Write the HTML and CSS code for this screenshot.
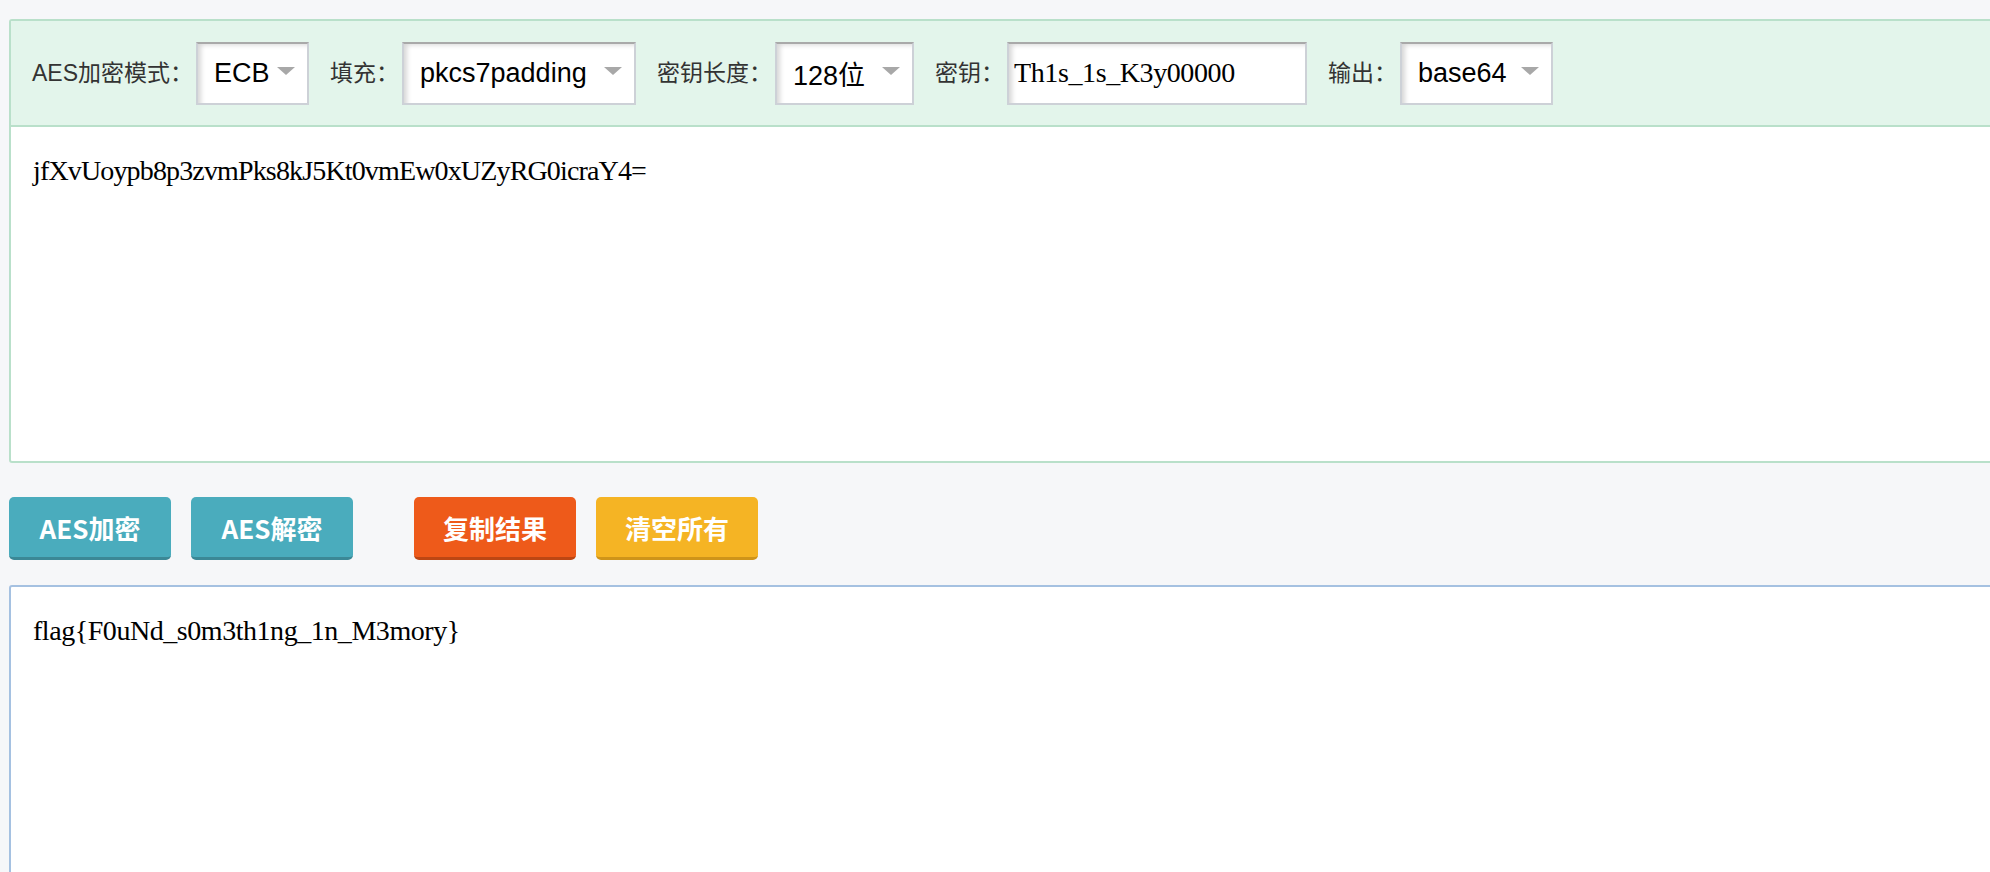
FILE: index.html
```html
<!DOCTYPE html>
<html lang="zh-CN">
<head>
<meta charset="utf-8">
<title>AES加密解密</title>
<link rel="stylesheet" href="styles.css">
</head>
<body>
<div class="panel panel-green">
  <div class="toolbar">
    <span class="lbl">AES加密模式：</span>
    <div class="sel w-ecb"><span class="val">ECB</span><i class="arrow"></i></div>
    <span class="lbl">填充：</span>
    <div class="sel w-pad"><span class="val">pkcs7padding</span><i class="arrow"></i></div>
    <span class="lbl">密钥长度：</span>
    <div class="sel w-len"><span class="val">128位</span><i class="arrow"></i></div>
    <span class="lbl">密钥：</span>
    <div class="keybox">Th1s_1s_K3y00000</div>
    <span class="lbl">输出：</span>
    <div class="sel w-out"><span class="val">base64</span><i class="arrow"></i></div>
  </div>
  <div class="text-area">jfXvUoypb8p3zvmPks8kJ5Kt0vmEw0xUZyRG0icraY4=</div>
</div>

<div class="actions">
  <button class="btn btn-teal">AES加密</button>
  <button class="btn btn-teal">AES解密</button>
  <button class="btn btn-orange btn-sep">复制结果</button>
  <button class="btn btn-yellow">清空所有</button>
</div>

<div class="panel panel-blue">
  <div class="text-area result">flag{F0uNd_s0m3th1ng_1n_M3mory}</div>
</div>
</body>
</html>
```

FILE: styles.css
```css
html, body {
  margin: 0;
  padding: 0;
}
body {
  background: #f6f7f9;
  padding: 19px 0 0 9px;
  overflow: hidden;
  height: 872px;
  box-sizing: border-box;
  font-family: "Noto Sans CJK SC", "Liberation Sans", sans-serif;
}

.panel {
  width: 2100px;
  background: #fff;
  border-radius: 3px;
}
.panel-green {
  border: 2px solid #b9e0ca;
}
.panel-blue {
  border: 2px solid #a5c1e1;
  margin-top: 25px;
}

.toolbar {
  background: #e3f5eb;
  border-bottom: 2px solid #b9e0ca;
  display: flex;
  align-items: center;
  padding-left: 21px;
  box-sizing: border-box;
  height: 106px;
}

.lbl {
  font-family: "Liberation Sans", "Noto Sans CJK SC", sans-serif;
  font-size: 23px;
  color: #333;
  margin-right: 3px;
  white-space: nowrap;
  line-height: 30px;
}

.sel, .keybox {
  height: 63px;
  box-sizing: border-box;
  background: #fff;
  border: 2px solid #cdd1d7;
  border-top-color: #a9a9a9;
  box-shadow: inset 6px 4px 5px -3px rgba(0, 0, 0, 0.16);
  margin-right: 21px;
  display: flex;
  align-items: center;
}

.sel {
  font-family: "Liberation Sans", Arial, "Noto Sans CJK SC", sans-serif;
  font-size: 27px;
  color: #000;
  padding: 0 12px 0 16px;
}
.sel .val {
  flex: 1;
  white-space: nowrap;
}
.arrow {
  width: 0;
  height: 0;
  border-left: 9px solid transparent;
  border-right: 9px solid transparent;
  border-top: 8px solid #a8a8a8;
  margin-top: -4px;
  flex: none;
}

.w-ecb { width: 113px; }
.w-pad { width: 234px; }
.w-len { width: 139px; }
.w-out { width: 153px; }

.keybox {
  width: 300px;
  padding-left: 5px;
  font-family: "Liberation Serif", "Times New Roman", serif;
  font-size: 28px;
  letter-spacing: -0.4px;
  color: #000;
}

.text-area {
  height: 334px;
  padding: 28px 22px;
  box-sizing: border-box;
  font-family: "Liberation Serif", "Times New Roman", serif;
  font-size: 28px;
  letter-spacing: -0.85px;
  line-height: 32px;
  color: #000;
}
.text-area.result {
  height: 400px;
  letter-spacing: -0.45px;
}

.actions {
  display: flex;
  margin-top: 34px;
  gap: 20px;
}
.btn {
  width: 162px;
  height: 63px;
  border: none;
  border-bottom: 3px solid;
  border-radius: 5px;
  color: #fff;
  font-family: "Noto Sans CJK SC", "Liberation Sans", sans-serif;
  font-weight: bold;
  font-size: 26px;
  padding: 0;
  display: flex;
  align-items: center;
  justify-content: center;
}
.btn-sep { margin-left: 41px; }
.btn-teal {
  background: #4aacbd;
  border-bottom-color: #3b8896;
}
.btn-orange {
  background: #ee5a1a;
  border-bottom-color: #bd4613;
}
.btn-yellow {
  background: #f5b424;
  border-bottom-color: #cf9419;
}
```
